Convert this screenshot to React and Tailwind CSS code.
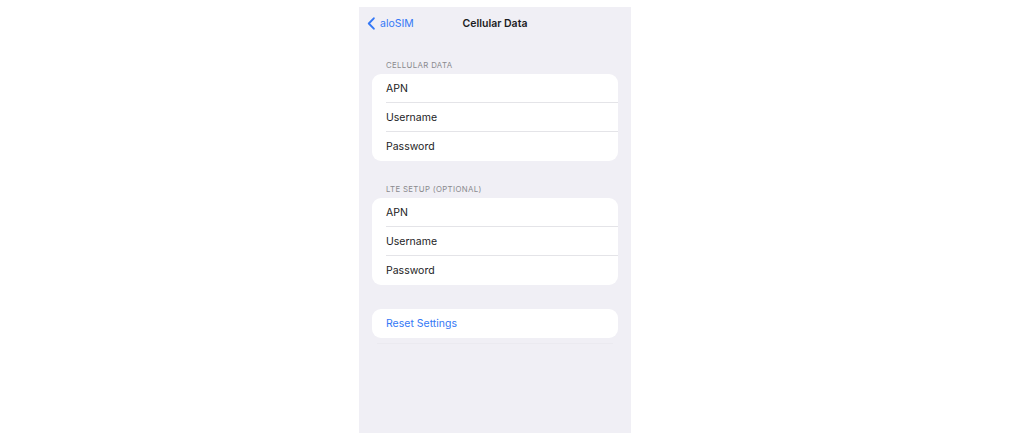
import React from 'react';

const font = { fontFamily: 'Inter, "Liberation Sans", Arial, sans-serif' };

function Section({ title, rows }) {
  return (
    <div>
      {title && (
        <div className="pl-[27px] h-[19px] flex items-end pb-[2px] text-[7.8px] tracking-[0.35px] text-[#8a8a8e] uppercase">
          {title}
        </div>
      )}
      <div className="mx-[13px] bg-white rounded-[9px] overflow-hidden">
        {rows.map((r, i) => (
          <div key={r} className="pl-[14px]">
            <div
              className={`h-[29px] flex items-center pt-[1px] text-[10.5px] text-[#1c1c1e] ${
                i < rows.length - 1 ? 'border-b border-[#e4e4e8]' : ''
              }`}
            >
              {r}
            </div>
          </div>
        ))}
      </div>
    </div>
  );
}

export default function App() {
  return (
    <div className="w-[1024px] h-[447px] bg-white flex" style={font}>
      <div className="w-[272px] h-[426px] mt-[7px] ml-[359px] bg-[#f0eff5] flex flex-col">
        {/* nav bar */}
        <div className="relative h-[33px] flex items-center justify-center">
          <div className="absolute left-[8px] top-[9px] flex items-center gap-[4px] text-[#3478f6]">
            <svg width="9" height="13" viewBox="0 0 9 13" fill="none">
              <path d="M6.8 1.3 1.8 6.5l5 5.2" stroke="#3478f6" strokeWidth="1.9" strokeLinecap="round" strokeLinejoin="round" />
            </svg>
            <span className="text-[10.5px]">aloSIM</span>
          </div>
          <span className="text-[10.5px] font-semibold text-[#1c1c1e] mt-[1px]">Cellular Data</span>
        </div>

        <div className="h-[15px]" />
        <Section title="Cellular Data" rows={['APN', 'Username', 'Password']} />

        <div className="h-[18px]" />
        <Section title="LTE Setup (Optional)" rows={['APN', 'Username', 'Password']} />

        <div className="h-[24px]" />
        <div className="mx-[13px] bg-white rounded-[9px] h-[29px] flex items-center pt-[1px] pl-[14px] text-[10.5px] text-[#3478f6]">
          Reset Settings
        </div>
        <div className="mx-[18px] mt-[5px] h-px bg-[#ebeaf0]" />
      </div>
    </div>
  );
}
